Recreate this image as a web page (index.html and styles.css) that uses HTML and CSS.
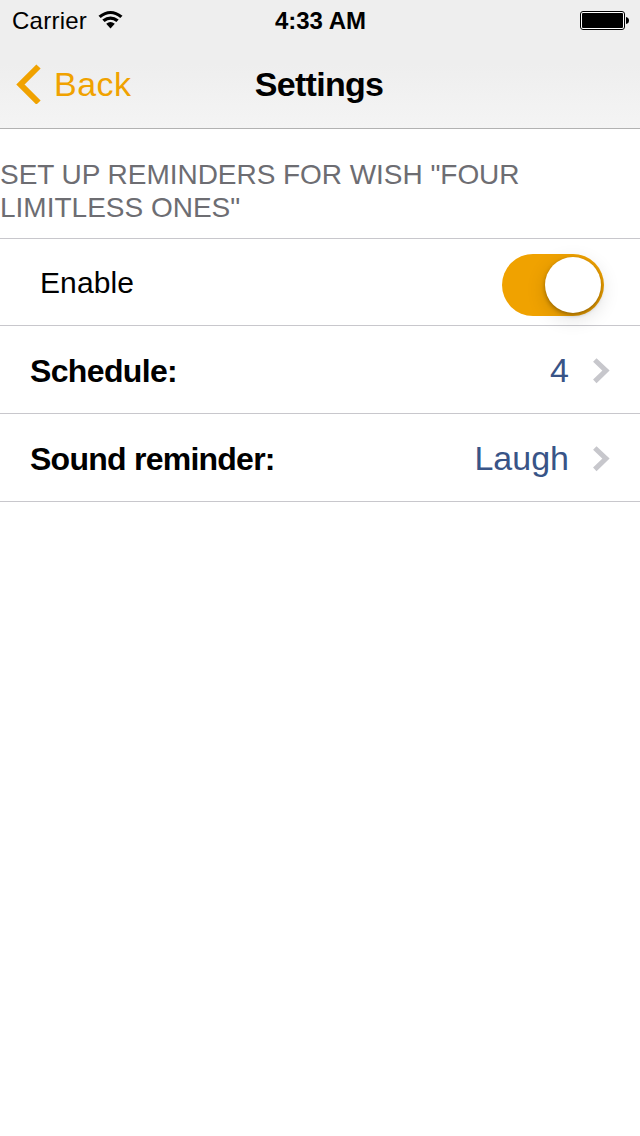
FILE: index.html
```html
<!DOCTYPE html>
<html lang="en">
<head>
<meta charset="utf-8">
<title>Settings</title>
<link rel="stylesheet" href="styles.css">
</head>
<body>
<header class="top">
  <div class="status">
    <div class="network">
      <span class="carrier">Carrier</span>
      <svg class="wifi" width="26" height="18" viewBox="0 0 26 18">
        <path d="M.5 4.700Q12.500 -4.700 24.500 4.700L22.300 7Q12.500 -.8 2.700 7Z"/>
        <path d="M4.300 8.600Q12.500 2.200 20.700 8.600L18.400 11Q12.500 6.400 6.600 11Z"/>
        <path d="M8.200 12.800Q12.500 9.200 16.800 12.800L12.500 17.400Z"/>
      </svg>
    </div>
    <span class="time">4:33 AM</span>
    <svg class="battery" width="49" height="19" viewBox="0 0 49 19">
      <rect x=".5" y=".5" width="44" height="18" rx="2.500" fill="#fff" stroke="#000"/>
      <rect x="2" y="2" width="41" height="15" rx="1"/>
      <path d="M46 6Q49 6.500 49 9.500Q49 12.500 46 13Z"/>
    </svg>
  </div>
  <nav class="nav">
    <a class="back">
      <svg width="26" height="40" viewBox="0 0 26 40"><path d="M22.500 2.500L4.500 20.500L22.500 38.500" fill="none" stroke="#f0a200" stroke-width="6"/></svg>
      <span class="back-label">Back</span>
    </a>
    <h1 class="title">Settings</h1>
  </nav>
</header>
<main>
  <h2 class="section"><span class="first">SET UP REMINDERS FOR WISH "FOUR</span><br><span class="second">LIMITLESS ONES"</span></h2>
  <div class="row enable">
    <span class="enable-label">Enable</span>
    <span class="switch"><span class="knob"></span></span>
  </div>
  <div class="row">
    <span class="label schedule">Schedule:</span>
    <span class="value">4</span>
    <svg class="chevron" width="18" height="26" viewBox="0 0 18 26"><path d="M1.800 2L13 12.600L1.800 23.400" fill="none" stroke="#c7c7cc" stroke-width="5"/></svg>
  </div>
  <div class="row">
    <span class="label sound">Sound reminder:</span>
    <span class="value laugh">Laugh</span>
    <svg class="chevron" width="18" height="26" viewBox="0 0 18 26"><path d="M1.800 2L13 12.600L1.800 23.400" fill="none" stroke="#c7c7cc" stroke-width="5"/></svg>
  </div>
</main>
</body>
</html>
```
FILE: styles.css
```css
* { box-sizing: border-box; }
body { margin: 0; min-height: 1136px; background: #fff; color: #000; font-family: "Liberation Sans", Arial, sans-serif; }
svg { display: block; flex: none; }
span, h1 { white-space: nowrap; }
.top { height: 129px; background: linear-gradient(#eee 0, #eee 50%, #f4f4f4 100%); border-bottom: 1px solid #b2b2b2; }
.status { display: grid; grid-template-columns: 1fr auto 1fr; height: 40px; padding: 0 11px 0 12px; font-size: 24px; line-height: 41px; }
.network { display: flex; }
.carrier { width: 86px; letter-spacing: .25px; }
.wifi { margin-top: 11px; }
.time { font-weight: bold; }
.battery { justify-self: end; margin-top: 11px; }
.nav { display: grid; grid-template-columns: 1fr auto 1fr; height: 88px; line-height: 88px; font-size: 34px; }
.back { display: flex; padding-left: 16px; color: #f0a200; }
.back svg { margin-top: 24px; }
.back-label { margin-left: 12px; letter-spacing: .5px; }
.title { margin: 0 1px 0 -1px; font-size: 34px; letter-spacing: -.7px; }
.section { margin: 0; height: 110px; padding-top: 29px; border-bottom: 1px solid #c8c7cc; color: #6d6d72; font-size: 28px; line-height: 33px; font-weight: normal; }
.first { letter-spacing: -.04px; }
.row { display: flex; height: 88px; padding: 0 29px 0 30px; border-bottom: 1px solid #c8c7cc; line-height: 88px; }
.enable { height: 87px; padding: 0 36px 0 40px; justify-content: space-between; }
.enable-label { font-size: 30px; letter-spacing: .1px; }
.switch { display: flex; justify-content: flex-end; width: 102px; height: 62px; margin-top: 15px; padding: 3px; border-radius: 31px; background: #f0a200; }
.knob { width: 56px; height: 56px; border-radius: 50%; background: #fff; box-shadow: 0 2px 4px rgba(0,0,0,.32), 0 5px 20px rgba(0,0,0,.14); }
.label { font-size: 32px; font-weight: bold; line-height: 90px; }
.schedule { letter-spacing: -.65px; }
.sound { letter-spacing: -.75px; }
.value { margin-left: auto; color: #385487; font-size: 34px; }
.chevron { margin: 32px 0 0 24px; }
```
